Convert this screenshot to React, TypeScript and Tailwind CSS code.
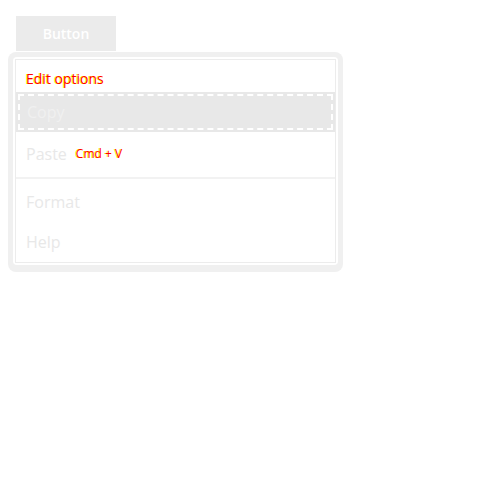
const items = [
  { label: "Copy", active: true },
  { label: "Paste", shortcut: "Cmd + V" },
];

const more = ["Format", "Help"];

export default function App() {
  return (
    <div className="min-h-[500px] bg-white p-2 font-['Open_Sans',sans-serif]">
      <button className="ml-2 mt-2 flex h-[35px] w-[100px] items-center justify-center bg-[#ebebeb] text-[14px] font-semibold text-white">
        Button
      </button>
      <div className="mt-px w-[335px] rounded-lg bg-[#f0f0f0] p-[5px] pb-[7px]">
        <div className="rounded bg-white p-[2px]">
          <div className="border border-[#ececec]">
            <div className="flex h-[32px] items-end px-[10px] pb-[3px] text-[14px] text-[#ff0000] [text-shadow:-1px_0_0_#ffff00]">
              Edit options
            </div>
            {items.map((item) =>
              item.active ? (
                <div key={item.label} className="h-[40px] bg-[#e8e8e8] p-[2px]">
                  <div className="flex h-full items-center border-2 border-dashed border-white px-[7px] text-base text-[#f0f0f0]">
                    {item.label}
                  </div>
                </div>
              ) : (
                <div
                  key={item.label}
                  className="flex h-[44px] items-center gap-[9px] px-[10px] text-base text-[#e8e8e8]"
                >
                  {item.label}
                  <span className="text-[12px] text-[#ff0000] [text-shadow:-1px_0_0_#ffff00]">
                    {item.shortcut}
                  </span>
                </div>
              )
            )}
            <div className="mb-[3px] mt-px h-[2px] bg-[#f2f2f2]" />
            {more.map((label) => (
              <div
                key={label}
                className="flex h-[40px] items-center px-[10px] text-base text-[#e8e8e8]"
              >
                {label}
              </div>
            ))}
          </div>
        </div>
      </div>
    </div>
  );
}
